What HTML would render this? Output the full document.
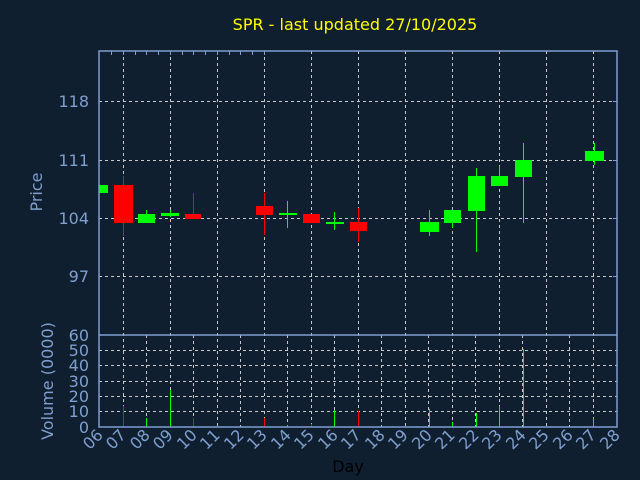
<!DOCTYPE html>
<html><head><style>html,body{margin:0;padding:0;background:#0f1f2f;}svg{display:block}</style></head>
<body>
<svg width="640" height="480" xmlns="http://www.w3.org/2000/svg" font-family="DejaVu Sans, Liberation Sans, sans-serif">
<rect width="640" height="480" fill="#0f1f2f"/>
<text x="355" y="30" fill="#ffff00" font-size="16" text-anchor="middle">SPR - last updated 27/10/2025</text>
<g stroke="#c8c8c8" stroke-dasharray="3,3" stroke-width="1">
<line x1="99" y1="101.5" x2="617" y2="101.5"/><line x1="99" y1="160.5" x2="617" y2="160.5"/><line x1="99" y1="218.5" x2="617" y2="218.5"/><line x1="99" y1="276.5" x2="617" y2="276.5"/>
<line x1="123.5" y1="51" x2="123.5" y2="427"/><line x1="170.5" y1="51" x2="170.5" y2="427"/><line x1="217.5" y1="51" x2="217.5" y2="427"/><line x1="264.5" y1="51" x2="264.5" y2="427"/><line x1="311.5" y1="51" x2="311.5" y2="427"/><line x1="358.5" y1="51" x2="358.5" y2="427"/><line x1="405.5" y1="51" x2="405.5" y2="427"/><line x1="452.5" y1="51" x2="452.5" y2="427"/><line x1="499.5" y1="51" x2="499.5" y2="427"/><line x1="546.5" y1="51" x2="546.5" y2="427"/><line x1="593.5" y1="51" x2="593.5" y2="427"/>
<line x1="146.5" y1="335" x2="146.5" y2="427"/><line x1="193.5" y1="335" x2="193.5" y2="427"/><line x1="240.5" y1="335" x2="240.5" y2="427"/><line x1="287.5" y1="335" x2="287.5" y2="427"/><line x1="334.5" y1="335" x2="334.5" y2="427"/><line x1="381.5" y1="335" x2="381.5" y2="427"/><line x1="428.5" y1="335" x2="428.5" y2="427"/><line x1="475.5" y1="335" x2="475.5" y2="427"/><line x1="522.5" y1="335" x2="522.5" y2="427"/><line x1="569.5" y1="335" x2="569.5" y2="427"/>
<line x1="99" y1="350.5" x2="617" y2="350.5"/><line x1="99" y1="365.5" x2="617" y2="365.5"/><line x1="99" y1="381.5" x2="617" y2="381.5"/><line x1="99" y1="396.5" x2="617" y2="396.5"/><line x1="99" y1="411.5" x2="617" y2="411.5"/>
</g>
<g fill="#00ff00" stroke="#00ff00">
<rect x="99" y="185" width="9" height="8" stroke="none"/>
<line x1="146.5" y1="210" x2="146.5" y2="214"/><rect x="138" y="214" width="17" height="9" stroke="none"/>
<line x1="170.5" y1="210" x2="170.5" y2="217"/><rect x="161" y="213" width="18" height="3" stroke="none"/>
<line x1="287.5" y1="201" x2="287.5" y2="228"/><rect x="279" y="213" width="18" height="2" stroke="none"/>
<line x1="334.5" y1="212" x2="334.5" y2="230"/><rect x="326" y="222" width="18" height="2" stroke="none"/>
<line x1="429.5" y1="210" x2="429.5" y2="236"/><rect x="420" y="222" width="19" height="10" stroke="none"/>
<line x1="452.5" y1="210" x2="452.5" y2="228"/><rect x="444" y="210" width="17" height="13" stroke="none"/>
<line x1="476.5" y1="168" x2="476.5" y2="252"/><rect x="468" y="176" width="17" height="35" stroke="none"/>
<line x1="499.5" y1="166" x2="499.5" y2="176"/><rect x="491" y="176" width="17" height="10" stroke="none"/>
<line x1="523.5" y1="143" x2="523.5" y2="223"/><rect x="515" y="160" width="17" height="17" stroke="none"/>
<line x1="594.5" y1="143" x2="594.5" y2="165"/><rect x="585" y="151" width="19" height="10" stroke="none"/>
</g>
<g fill="#ff0000" stroke="#ff0000">
<line x1="123.5" y1="176" x2="123.5" y2="236"/><rect x="114" y="185" width="19" height="38" stroke="none"/>
<line x1="193.5" y1="193" x2="193.5" y2="218"/><rect x="185" y="214" width="16" height="5" stroke="none"/>
<line x1="264.5" y1="193" x2="264.5" y2="235"/><rect x="256" y="206" width="17" height="9" stroke="none"/>
<rect x="303" y="214" width="17" height="9" stroke="none"/>
<line x1="358.5" y1="208" x2="358.5" y2="242"/><rect x="350" y="222" width="17" height="9" stroke="none"/>
</g>
<g stroke-width="1">
<line x1="123.5" y1="427" x2="123.5" y2="406" stroke="#ff0000"/>
<line x1="146.5" y1="427" x2="146.5" y2="418" stroke="#00ff00"/>
<line x1="170.5" y1="427" x2="170.5" y2="390" stroke="#00ff00"/>
<line x1="193.5" y1="427" x2="193.5" y2="418" stroke="#ff0000"/>
<line x1="264.5" y1="427" x2="264.5" y2="418" stroke="#ff0000"/>
<line x1="287.5" y1="427" x2="287.5" y2="425" stroke="#00ff00"/>
<line x1="311.5" y1="427" x2="311.5" y2="424" stroke="#ff0000"/>
<line x1="334.5" y1="427" x2="334.5" y2="410" stroke="#00ff00"/>
<line x1="358.5" y1="427" x2="358.5" y2="411" stroke="#ff0000"/>
<line x1="429.5" y1="427" x2="429.5" y2="409" stroke="#00ff00"/>
<line x1="452.5" y1="427" x2="452.5" y2="422" stroke="#00ff00"/>
<line x1="476.5" y1="427" x2="476.5" y2="413" stroke="#00ff00"/>
<line x1="499.5" y1="427" x2="499.5" y2="406" stroke="#00ff00"/>
<line x1="523.5" y1="427" x2="523.5" y2="349" stroke="#00ff00"/>
<line x1="593.5" y1="427" x2="593.5" y2="418" stroke="#00ff00"/>
</g>
<g fill="none" stroke="#7f9fcf" stroke-width="1.5">
<rect x="99" y="51" width="518" height="376"/>
<line x1="99" y1="335" x2="617" y2="335"/>
</g>
<g stroke="#7f9fcf" stroke-width="1">
<line x1="111.5" y1="51" x2="111.5" y2="55"/><line x1="123.5" y1="51" x2="123.5" y2="55"/><line x1="135.5" y1="51" x2="135.5" y2="55"/><line x1="146.5" y1="51" x2="146.5" y2="55"/><line x1="158.5" y1="51" x2="158.5" y2="55"/><line x1="170.5" y1="51" x2="170.5" y2="55"/><line x1="182.5" y1="51" x2="182.5" y2="55"/><line x1="193.5" y1="51" x2="193.5" y2="55"/><line x1="205.5" y1="51" x2="205.5" y2="55"/><line x1="217.5" y1="51" x2="217.5" y2="55"/><line x1="229.5" y1="51" x2="229.5" y2="55"/><line x1="240.5" y1="51" x2="240.5" y2="55"/><line x1="252.5" y1="51" x2="252.5" y2="55"/><line x1="264.5" y1="51" x2="264.5" y2="55"/>
<line x1="613" y1="101.5" x2="617" y2="101.5"/><line x1="613" y1="160.5" x2="617" y2="160.5"/><line x1="613" y1="218.5" x2="617" y2="218.5"/><line x1="613" y1="276.5" x2="617" y2="276.5"/>
</g>
<g fill="#7f9fcf" font-size="16" text-anchor="end">
<text x="89" y="107">118</text><text x="89" y="166">111</text><text x="89" y="224">104</text><text x="89" y="282">97</text>
<text x="89" y="341">60</text><text x="89" y="356">50</text><text x="89" y="371">40</text><text x="89" y="387">30</text><text x="89" y="402">20</text><text x="89" y="417">10</text><text x="89" y="433">0</text>
</g>
<text transform="translate(42,192) rotate(-90)" fill="#7f9fcf" font-size="16" text-anchor="middle">Price</text>
<text transform="translate(53,381) rotate(-90)" fill="#7f9fcf" font-size="16" text-anchor="middle">Volume (0000)</text>
<g fill="#7f9fcf" font-size="16" text-anchor="end">
<text transform="translate(104,436) rotate(-45)">06</text><text transform="translate(127,436) rotate(-45)">07</text><text transform="translate(151,436) rotate(-45)">08</text><text transform="translate(174,436) rotate(-45)">09</text><text transform="translate(198,436) rotate(-45)">10</text><text transform="translate(221,436) rotate(-45)">11</text><text transform="translate(245,436) rotate(-45)">12</text><text transform="translate(268,436) rotate(-45)">13</text><text transform="translate(292,436) rotate(-45)">14</text><text transform="translate(315,436) rotate(-45)">15</text><text transform="translate(339,436) rotate(-45)">16</text><text transform="translate(362,436) rotate(-45)">17</text><text transform="translate(386,436) rotate(-45)">18</text><text transform="translate(409,436) rotate(-45)">19</text><text transform="translate(433,436) rotate(-45)">20</text><text transform="translate(456,436) rotate(-45)">21</text><text transform="translate(480,436) rotate(-45)">22</text><text transform="translate(503,436) rotate(-45)">23</text><text transform="translate(527,436) rotate(-45)">24</text><text transform="translate(550,436) rotate(-45)">25</text><text transform="translate(574,436) rotate(-45)">26</text><text transform="translate(597,436) rotate(-45)">27</text><text transform="translate(621,436) rotate(-45)">28</text>
</g>
<text x="348" y="472" fill="#000000" font-size="16" text-anchor="middle">Day</text>
</svg>
</body></html>
